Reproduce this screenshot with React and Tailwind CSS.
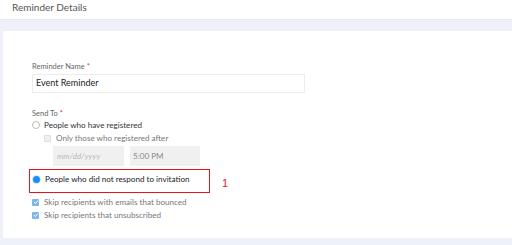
export default function App() {
  const font = { fontFamily: "Lato, 'Noto Sans', sans-serif" };
  const check = (
    <span className="w-[7px] h-[7px] bg-[#7eb6e8] rounded-[1px] flex items-center justify-center">
      <svg width="6" height="6" viewBox="0 0 6 6"><path d="M1 3.1 L2.4 4.5 L5 1.6" stroke="white" strokeWidth="1" fill="none" /></svg>
    </span>
  );
  return (
    <div className="w-[512px] h-[245px] overflow-hidden bg-[#eef2f8]" style={font}>
      <div className="h-[20px] bg-white border-b border-[#e6e9ee] pl-[12px] flex items-center">
        <span className="text-[10px] text-[#555] leading-none -mt-[5px]">Reminder Details</span>
      </div>
      <div className="mt-[11px] ml-[3px] h-[207px] bg-white pl-[29px] pt-[32px]">
        <div className="text-[7.5px] text-[#666] leading-none">
          Reminder Name <span className="text-[#e0323a]">*</span>
        </div>
        <div className="mt-[3px] w-[273px] h-[19px] border border-[#ececec] flex items-center pl-[3px] text-[9px] text-[#222]">
          Event Reminder
        </div>
        <div className="mt-[17px] text-[7.5px] text-[#666] leading-none">
          Send To <span className="text-[#e0323a]">*</span>
        </div>
        <div className="mt-[3px] flex items-center h-[10px]">
          <span className="w-[8px] h-[8px] rounded-full border border-[#bbb] bg-white" />
          <span className="ml-[4px] text-[8.1px] text-[#333]">People who have registered</span>
        </div>
        <div className="mt-[3px] ml-[12px] flex items-center h-[10px]">
          <span className="w-[7px] h-[7px] border border-[#ddd] bg-[#f0f0f0] rounded-[1px]" />
          <span className="ml-[5px] text-[8.1px] text-[#777]">Only those who registered after</span>
        </div>
        <div className="mt-[3px] ml-[21px] flex gap-[6px]">
          <div className="w-[71px] h-[20px] bg-[#f0f0f0] flex items-center pl-[4px] text-[8.1px] italic text-[#bbb]">mm/dd/yyyy</div>
          <div className="w-[70px] h-[20px] bg-[#f0f0f0] flex items-center pl-[3px] text-[8.1px] text-[#888]">5:00 PM</div>
        </div>
        <div className="mt-[3px] -ml-[3px] flex items-center">
          <div className="w-[181px] h-[24px] border border-[#e8141c] flex items-center pl-[3px] pb-[4px]">
            <span className="w-[7px] h-[7px] rounded-full bg-[#1a8cff] ring-1 ring-[#d6e9ff]" />
            <span className="ml-[5px] text-[8.1px] text-[#222]">People who did not respond to invitation</span>
          </div>
          <span className="ml-[12px] mt-[5px] text-[11px] text-[#e8141c]" style={{ fontFamily: "'Liberation Sans', sans-serif" }}>1</span>
        </div>
        <div className="mt-[4px] flex items-center h-[10px]">
          {check}
          <span className="ml-[5px] text-[8.1px] text-[#777]">Skip recipients with emails that bounced</span>
        </div>
        <div className="mt-[3px] flex items-center h-[10px]">
          {check}
          <span className="ml-[5px] text-[8.1px] text-[#777]">Skip recipients that unsubscribed</span>
        </div>
      </div>
    </div>
  );
}
